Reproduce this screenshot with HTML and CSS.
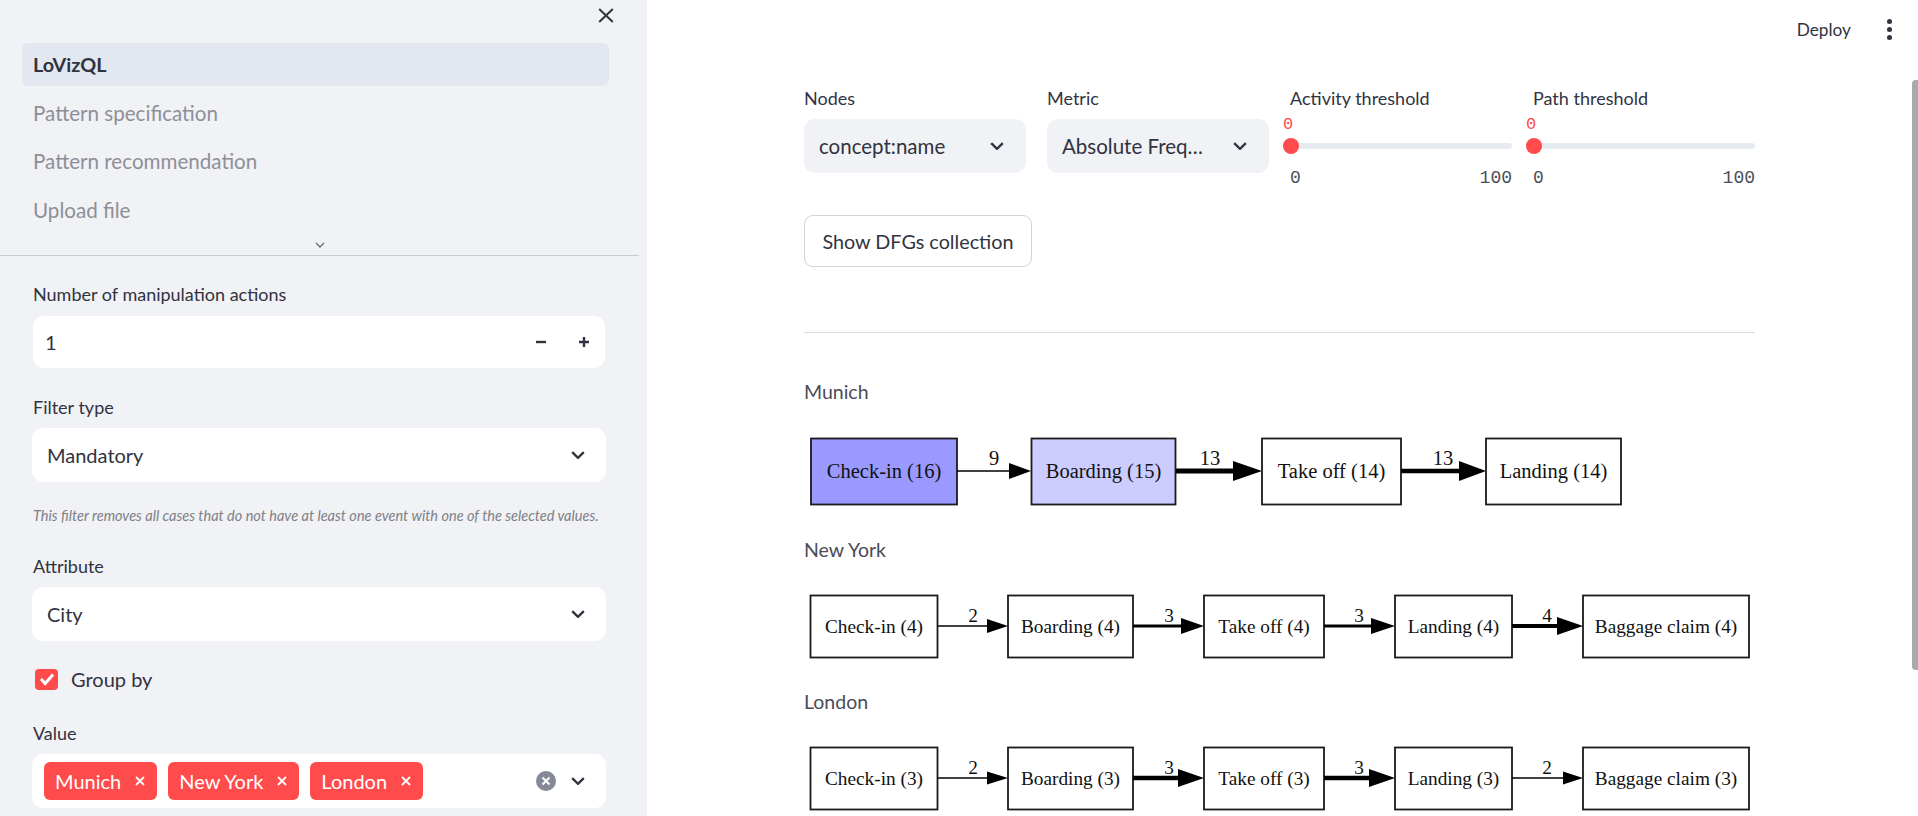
FILE: index.html
```html
<!DOCTYPE html>
<html lang="en">
<head>
<meta charset="utf-8">
<title>LoVizQL</title>
<link rel="stylesheet" href="styles.css">
</head>
<body>
<div class="app">
  <aside class="sidebar">
    <div class="close-row">
      <svg class="close-icon" viewBox="0 0 16 15"><path d="M1.2 1L14.8 14M14.8 1L1.2 14"/></svg>
    </div>
    <nav class="nav">
      <div class="nav-item active">LoVizQL</div>
      <div class="nav-item">Pattern specification</div>
      <div class="nav-item">Pattern recommendation</div>
      <div class="nav-item">Upload file</div>
    </nav>
    <div class="nav-more">
      <svg class="more-icon" viewBox="0 0 10 6"><path d="M1 1L5 5L9 1"/></svg>
    </div>
    <div class="form">
      <label class="label">Number of manipulation actions</label>
      <div class="number-input">
        <span>1</span>
        <span class="steppers">
          <svg class="step" viewBox="0 0 12 12"><path d="M1 6H11"/></svg>
          <svg class="step" viewBox="0 0 12 12"><path d="M1 6H11M6 1V11"/></svg>
        </span>
      </div>
      <label class="label gap-a">Filter type</label>
      <div class="select wide">
        <span class="select-text">Mandatory</span>
        <svg class="chevron" viewBox="0 0 14 8"><path d="M1.2 1.2L7 6.8L12.8 1.2"/></svg>
      </div>
      <p class="caption">This filter removes all cases that do not have at least one event with one of the selected values.</p>
      <label class="label gap-b">Attribute</label>
      <div class="select wide">
        <span class="select-text">City</span>
        <svg class="chevron" viewBox="0 0 14 8"><path d="M1.2 1.2L7 6.8L12.8 1.2"/></svg>
      </div>
      <div class="check-row">
        <span class="checkbox"><svg class="tick" viewBox="0 0 16 14"><path d="M2 7L6.2 11.5L14 2.5"/></svg></span>
        <span>Group by</span>
      </div>
      <label class="label gap-c">Value</label>
      <div class="select wide multi">
        <span class="tags">
          <span class="tag">Munich<svg class="tag-x" viewBox="0 0 10 10"><path d="M1 1L9 9M9 1L1 9"/></svg></span>
          <span class="tag">New York<svg class="tag-x" viewBox="0 0 10 10"><path d="M1 1L9 9M9 1L1 9"/></svg></span>
          <span class="tag">London<svg class="tag-x" viewBox="0 0 10 10"><path d="M1 1L9 9M9 1L1 9"/></svg></span>
        </span>
        <span class="clear"><svg class="clear-x" viewBox="0 0 10 10"><path d="M1.5 1.5L8.5 8.5M8.5 1.5L1.5 8.5"/></svg></span>
        <svg class="chevron" viewBox="0 0 14 8"><path d="M1.2 1.2L7 6.8L12.8 1.2"/></svg>
      </div>
    </div>
  </aside>

  <main class="main">
    <header class="toolbar">
      <span class="deploy">Deploy</span>
      <span class="dots"><i></i><i></i><i></i></span>
    </header>
    <div class="content">
      <div class="controls">
        <div>
          <div class="label tight">Nodes</div>
          <div class="select grey">
            <span class="select-text">concept:name</span>
            <svg class="chevron" viewBox="0 0 14 8"><path d="M1.2 1.2L7 6.8L12.8 1.2"/></svg>
          </div>
        </div>
        <div>
          <div class="label tight">Metric</div>
          <div class="select grey">
            <span class="select-text">Absolute Frequency</span>
            <svg class="chevron" viewBox="0 0 14 8"><path d="M1.2 1.2L7 6.8L12.8 1.2"/></svg>
          </div>
        </div>
        <div>
          <div class="label flat">Activity threshold</div>
          <div class="slider">
            <div class="slider-value">0</div>
            <div class="track"><span class="thumb"></span></div>
            <div class="ticks"><span>0</span><span>100</span></div>
          </div>
        </div>
        <div>
          <div class="label flat">Path threshold</div>
          <div class="slider">
            <div class="slider-value">0</div>
            <div class="track"><span class="thumb"></span></div>
            <div class="ticks"><span>0</span><span>100</span></div>
          </div>
        </div>
      </div>
      <button class="button">Show DFGs collection</button>
      <hr class="rule">

      <div class="graph-title first">Munich</div>
      <svg class="graph g-munich" viewBox="804 430 951 82">
        <rect class="node n1" x="811" y="438.5" width="146" height="66"/>
        <rect class="node n2" x="1031.500" y="438.5" width="144" height="66"/>
        <rect class="node" x="1262" y="438.5" width="139" height="66"/>
        <rect class="node" x="1486" y="438.5" width="135" height="66"/>
        <text class="ntext big" x="884" y="478">Check-in (16)</text>
        <text class="ntext big" x="1103.500" y="478">Boarding (15)</text>
        <text class="ntext big" x="1331.500" y="478">Take off (14)</text>
        <text class="ntext big" x="1553.500" y="478">Landing (14)</text>
        <path class="edge" stroke-width="1.500" d="M957 471H1010"/>
        <polygon points="1009,463 1031,471 1009,479"/>
        <text class="ntext big" x="994" y="465">9</text>
        <path class="edge" stroke-width="5" d="M1176 471H1235"/>
        <polygon points="1233,461 1262,471 1233,481"/>
        <text class="ntext big" x="1210" y="465">13</text>
        <path class="edge" stroke-width="4.500" d="M1401 471H1461"/>
        <polygon points="1459,461 1486,471 1459,481"/>
        <text class="ntext big" x="1443" y="465">13</text>
      </svg>

      <div class="graph-title second">New York</div>
      <svg class="graph g-row" viewBox="804 587 951 78">
        <rect class="node" x="810.500" y="595.500" width="127" height="62"/>
        <rect class="node" x="1008" y="595.500" width="125" height="62"/>
        <rect class="node" x="1204" y="595.500" width="120" height="62"/>
        <rect class="node" x="1395" y="595.500" width="117" height="62"/>
        <rect class="node" x="1583" y="595.500" width="166" height="62"/>
        <text class="ntext" x="874" y="633">Check-in (4)</text>
        <text class="ntext" x="1070.500" y="633">Boarding (4)</text>
        <text class="ntext" x="1264" y="633">Take off (4)</text>
        <text class="ntext" x="1453.500" y="633">Landing (4)</text>
        <text class="ntext" x="1666" y="633">Baggage claim (4)</text>
        <path class="edge" stroke-width="1.500" d="M938 626H988"/>
        <polygon points="987,619 1008,626 987,633"/>
        <text class="ntext" x="973" y="622">2</text>
        <path class="edge" stroke-width="3" d="M1133 626H1182"/>
        <polygon points="1181,618 1204,626 1181,634"/>
        <text class="ntext" x="1169" y="622">3</text>
        <path class="edge" stroke-width="3" d="M1324 626H1372"/>
        <polygon points="1371,618 1395,626 1371,634"/>
        <text class="ntext" x="1359" y="622">3</text>
        <path class="edge" stroke-width="4" d="M1512 626H1558"/>
        <polygon points="1557,617 1583,626 1557,635"/>
        <text class="ntext" x="1547" y="622">4</text>
      </svg>

      <div class="graph-title third">London</div>
      <svg class="graph g-row" viewBox="804 739 951 78">
        <rect class="node" x="810.500" y="747.500" width="127" height="62"/>
        <rect class="node" x="1008" y="747.500" width="125" height="62"/>
        <rect class="node" x="1204" y="747.500" width="120" height="62"/>
        <rect class="node" x="1395" y="747.500" width="117" height="62"/>
        <rect class="node" x="1583" y="747.500" width="166" height="62"/>
        <text class="ntext" x="874" y="785">Check-in (3)</text>
        <text class="ntext" x="1070.500" y="785">Boarding (3)</text>
        <text class="ntext" x="1264" y="785">Take off (3)</text>
        <text class="ntext" x="1453.500" y="785">Landing (3)</text>
        <text class="ntext" x="1666" y="785">Baggage claim (3)</text>
        <path class="edge" stroke-width="1.500" d="M938 778H988"/>
        <polygon points="987,771.500 1008,778 987,784.500"/>
        <text class="ntext" x="973" y="774">2</text>
        <path class="edge" stroke-width="4.500" d="M1133 778H1180"/>
        <polygon points="1178,769 1204,778 1178,787"/>
        <text class="ntext" x="1169" y="774">3</text>
        <path class="edge" stroke-width="4.500" d="M1324 778H1371"/>
        <polygon points="1369,769 1395,778 1369,787"/>
        <text class="ntext" x="1359" y="774">3</text>
        <path class="edge" stroke-width="1.500" d="M1512 778H1564"/>
        <polygon points="1563,771.500 1583,778 1563,784.500"/>
        <text class="ntext" x="1547" y="774">2</text>
      </svg>
    </div>
    <div class="scrollbar"></div>
  </main>
</div>
</body>
</html>
```

FILE: styles.css
```css
* { box-sizing: border-box; }
html, body {
  margin: 0;
  height: 816px;
  overflow: hidden;
  background: #fff;
  color: #31333f;
  font-family: "Lato", "Noto Sans", sans-serif;
  font-size: 18px;
}
.app { display: flex; height: 816px; }

/* sidebar */
.sidebar {
  flex: 0 0 647px;
  background: #f0f2f6;
  overflow: hidden;
}
.close-row {
  height: 43px;
  display: flex;
  justify-content: flex-end;
  padding: 8px 33px 0 0;
}
.close-icon { width: 16px; height: 15px; fill: none; stroke: #31333f; stroke-width: 2; }
.nav { margin-left: 22px; width: 587px; display: flex; flex-direction: column; gap: 5.6px; }
.nav-item {
  height: 43px;
  line-height: 43px;
  padding-left: 11px;
  border-radius: 6px;
  font-size: 20.600px;
  color: #8e8f97;
}
.nav-item.active { background: #e3e7ef; color: #31333f; font-weight: 700; font-size: 19.800px; }
.nav-more {
  width: 639px;
  height: 24px;
  border-bottom: 1px solid #c9cbd0;
  display: flex;
  justify-content: center;
  align-items: flex-start;
  padding-top: 10px;
}
.more-icon { width: 10px; height: 6px; fill: none; stroke: #6a6c75; stroke-width: 1.300; }
.form { padding: 27px 41px 0 32px; }
.label { display: block; height: 22px; line-height: 22px; font-size: 18px; padding-left: 1px; }
.number-input {
  margin: 11px 1px 0;
  height: 52px;
  background: #fff;
  border-radius: 11px;
  display: flex;
  align-items: center;
  justify-content: space-between;
  padding: 0 15px 0 12px;
  font-size: 20px;
}
.steppers { display: flex; gap: 31px; }
.step { width: 12px; height: 12px; fill: none; stroke: #31333f; stroke-width: 2.400; }
.gap-a { margin-top: 28px; }
.gap-b { margin-top: 28px; }
.gap-c { margin-top: 32px; }
.select {
  height: 54px;
  background: #fff;
  border-radius: 11px;
  display: flex;
  align-items: center;
  gap: 16px;
  font-size: 20px;
}
.select.wide { margin-top: 10px; padding: 0 21px 0 15px; }
.select.grey { background: #f0f2f6; padding: 0 22px 0 15px; font-size: 20.500px; gap: 26px; }
.select-text { flex: 1; min-width: 0; white-space: nowrap; overflow: hidden; text-overflow: ellipsis; }
.chevron { flex: none; width: 14px; height: 8px; fill: none; stroke: #31333f; stroke-width: 2.400; }
.caption {
  margin: 0;
  padding: 23px 0 0 1px;
  height: 45px;
  line-height: 22px;
  font-size: 14.500px;
  font-style: italic;
  color: #7f8087;
  white-space: nowrap;
}
.check-row {
  display: flex;
  align-items: center;
  gap: 13px;
  margin: 28px 0 0 3px;
  height: 21px;
  font-size: 20px;
}
.checkbox {
  width: 23px;
  height: 21px;
  background: #ff4b4b;
  border-radius: 4px;
  display: flex;
  align-items: center;
  justify-content: center;
}
.tick { width: 16px; height: 14px; fill: none; stroke: #fff; stroke-width: 3; }
.select.multi { padding: 0 21px 0 12px; gap: 0; }
.tags { flex: 1; display: flex; gap: 11px; }
.tag {
  height: 38px;
  background: #ff4b4b;
  color: #fff;
  border-radius: 6px;
  display: flex;
  align-items: center;
  gap: 14px;
  padding: 0 12px 0 11px;
  font-size: 20px;
}
.tag-x { width: 10px; height: 10px; fill: none; stroke: #fff; stroke-width: 1.800; }
.clear {
  flex: none;
  width: 20px;
  height: 20px;
  margin-right: 15px;
  border-radius: 50%;
  background: #858896;
  display: flex;
  align-items: center;
  justify-content: center;
}
.clear-x { width: 10px; height: 10px; fill: none; stroke: #fff; stroke-width: 2; }

/* main */
.main { flex: 1; position: relative; overflow: hidden; }
.toolbar {
  height: 58px;
  display: flex;
  justify-content: flex-end;
  align-items: center;
  padding-right: 26px;
  gap: 36px;
}
.deploy { font-size: 17.300px; }
.dots { display: flex; flex-direction: column; gap: 3px; }
.dots i { display: block; width: 5px; height: 5px; border-radius: 50%; background: #31333f; }
.content { padding: 29px 0 0 157px; width: 1108px; }
.controls {
  display: grid;
  grid-template-columns: repeat(4, 222px);
  column-gap: 21px;
}
.label.tight { padding-left: 0; margin-bottom: 10px; }
.label.flat { padding-left: 0; }
.slider { font-family: "Liberation Mono", monospace; font-size: 18px; }
.slider-value {
  margin: 6px 0 0 -7px;
  height: 20px;
  line-height: 20px;
  font-size: 17px;
  color: #ff4b4b;
}
.track {
  position: relative;
  margin: 8px 0 0 -7px;
  height: 6px;
  border-radius: 3px;
  background: #e6eaf1;
}
.thumb {
  position: absolute;
  left: 0;
  top: -5px;
  width: 16px;
  height: 16px;
  border-radius: 50%;
  background: #ff4b4b;
}
.ticks {
  display: flex;
  justify-content: space-between;
  margin-top: 18px;
  height: 22px;
  line-height: 22px;
  color: #4c4e59;
}
.button {
  display: block;
  margin-top: 26px;
  width: 228px;
  height: 52px;
  padding: 0;
  background: #fff;
  border: 1px solid #d2d3d7;
  border-radius: 9px;
  color: #31333f;
  font-family: inherit;
  font-size: 19.800px;
}
.rule { margin: 65px 0 0; border: 0; border-top: 1px solid #dcdde1; width: 951px; }
.graph-title { height: 22px; line-height: 22px; font-size: 19.500px; color: #4a4c57; }
.first { margin-top: 48px; }
.second { margin-top: 27px; }
.third { margin-top: 26px; }
.graph { display: block; width: 951px; }
.g-munich { height: 82px; margin-top: 27px; }
.g-row { height: 78px; margin-top: 26px; }
.node { fill: #fff; stroke: #1a1a1a; stroke-width: 1.800; }
.n1 { fill: #9999ff; }
.n2 { fill: #ccccff; }
.edge { stroke: #000; fill: none; }
.ntext {
  font-family: "Liberation Serif", "Times New Roman", serif;
  font-size: 19.300px;
  text-anchor: middle;
  fill: #111;
}
.ntext.big { font-size: 20.500px; }
.scrollbar {
  position: absolute;
  right: 0;
  top: 80px;
  width: 6px;
  height: 590px;
  border-radius: 4px 0 0 4px;
  background: #a9aaae;
}
```
